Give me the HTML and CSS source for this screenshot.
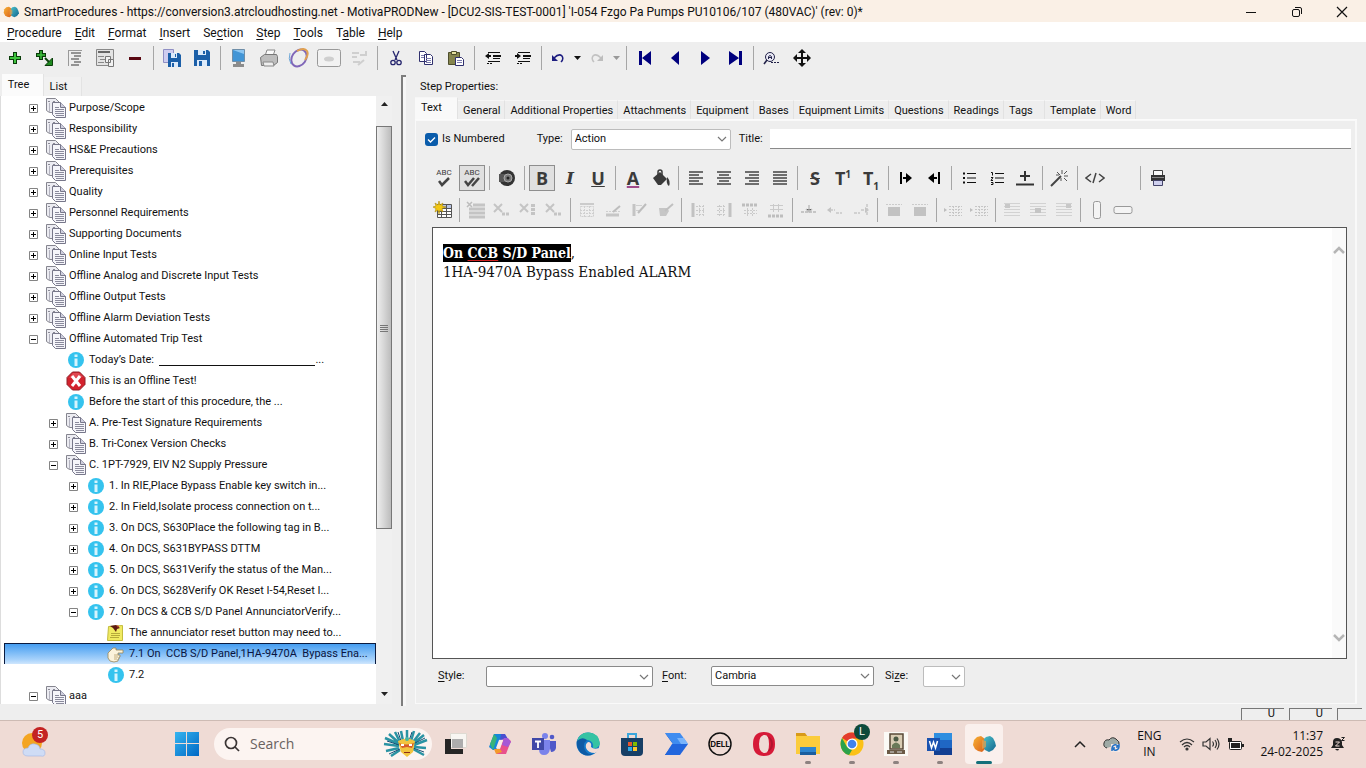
FILE: index.html
```html
<!DOCTYPE html>
<html lang="en">
<head>
<meta charset="utf-8">
<title>SmartProcedures</title>
<link rel="stylesheet" href="styles.css">
</head>
<body>
<svg class="sprite" aria-hidden="true">
  <defs>
    <linearGradient id="g-org" x1="0" y1="0" x2="1" y2="1"><stop offset="0" stop-color="#f9b233"/><stop offset="1" stop-color="#d9601c"/></linearGradient>
    <linearGradient id="g-teal" x1="0" y1="0" x2="1" y2="1"><stop offset="0" stop-color="#4fc3c9"/><stop offset="1" stop-color="#12658f"/></linearGradient>
    <linearGradient id="g-win" x1="0" y1="0" x2="1" y2="1"><stop offset="0" stop-color="#35b5f0"/><stop offset="1" stop-color="#0067c4"/></linearGradient>
  </defs>
  <symbol id="logo" viewBox="0 0 24 18"><path fill="url(#g-org)" d="M5 2l4-1 4 3v10l-3 3-4-1-3-2-2-4 1-5z"/><path fill="url(#g-teal)" d="M14 2l4-1 3 2 2 4 1 4-3 4-4 2-4-2-2-4 1-7z"/><path fill="#e9a04a" d="M10 5l4 1v6l-4 2z" opacity=".7"/></symbol>
  <symbol id="plus" viewBox="0 0 11 11"><path fill="#fff" stroke="#848484" d="M1.500 1.500h8v8h-8z"/><path stroke="#000" d="M3 5.500h5M5.500 3v5"/></symbol>
  <symbol id="minus" viewBox="0 0 11 11"><path fill="#fff" stroke="#848484" d="M1.500 1.500h8v8h-8z"/><path stroke="#000" d="M3 5.500h5"/></symbol>
  <symbol id="doc" viewBox="0 0 20 20"><path fill="#ececf2" stroke="#85858f" d="M.5.500h9l4 4v10h-10L.5 12.500z"/><path stroke="#8a8a96" d="M2 3.500h2M7 3.500h2"/><path stroke="#b4b4c0" d="M3.500 5v9"/><path fill="#f5f5fa" stroke="#77778a" d="M6.500 4.500h8l5 5v10h-10l-3-3z"/><path fill="#cfcfde" stroke="#77778a" d="M14.500 4.500v5h5"/><path stroke="#8a8a9c" d="M9 9.500h4M9 11.500h9M9 13.500h9M9 15.500h9M10 17.500h8"/></symbol>
  <symbol id="info" viewBox="0 0 20 20"><circle cx="10" cy="10" r="8" fill="#35c3ee"/><path fill="#d6f4fd" d="M8.500 4.500h3v2.500h-3zM8.500 8.500h3V16h-3z"/></symbol>
  <symbol id="stop" viewBox="0 0 20 20"><path fill="#d3222d" stroke="#8f2029" d="M6.500 1h7L19 6.500v7L13.500 19h-7L1 13.500v-7z"/><path fill="#e9626a" d="M7 2h6l4 4-14 1z" opacity=".6"/><path stroke="#fff" stroke-width="3" d="M6 5l8 10M14 5l-8 10"/></symbol>
  <symbol id="note" viewBox="0 0 20 20"><path fill="#f0ea62" stroke="#c4bd3e" d="M2.500 3.500l14-1v15h-15z"/><path stroke="#b5a93a" d="M5 10.500h9M5 12.500h9M4 14.500h9"/><path fill="#5b1a12" d="M4 3l6-1 4 3-3 1-1 3-3-4z"/><path fill="#b43a28" d="M10 2l3 1-1 2z"/></symbol>
  <symbol id="hand" viewBox="0 0 20 20"><path fill="#fbf3dc" stroke="#9a8757" stroke-width=".8" d="M2 9l5-5h3v2h7v3h-5v2h2v2h-1v2h-1v2l-4 1-4-1-2-3z"/><path stroke="#b7a06a" stroke-width=".8" d="M8 11h4M8 13h4M8 15h3"/></symbol>
  <symbol id="floppy" viewBox="0 0 20 20"><path fill="#1b5fa8" d="M2 2h14l2 2v14H2z"/><path fill="#dceafa" d="M6 2h8v5H6zM5 12h10v6H5z"/><path fill="#1b5fa8" d="M11 3h2v3h-2zM7 13h3v5H7z"/></symbol>
  <symbol id="i-l" viewBox="0 0 18 18"><path stroke="#444" stroke-width="1.300" d="M2 3h14M2 6h10M2 9h14M2 12h10M2 15h14"/></symbol>
  <symbol id="i-c" viewBox="0 0 18 18"><path stroke="#444" stroke-width="1.300" d="M2 3h14M4 6h10M2 9h14M4 12h10M2 15h14"/></symbol>
  <symbol id="i-r" viewBox="0 0 18 18"><path stroke="#444" stroke-width="1.300" d="M2 3h14M6 6h10M2 9h14M6 12h10M2 15h14"/></symbol>
  <symbol id="i-j" viewBox="0 0 18 18"><path stroke="#444" stroke-width="1.300" d="M2 3h14M2 6h14M2 9h14M2 12h14M2 15h14"/></symbol>
  <symbol id="t-grid" viewBox="0 0 18 18"><path stroke="#cbcbcb" stroke-width="2" d="M2 3h14"/><path fill="none" stroke="#cfcfcf" stroke-dasharray="2 1" d="M2.500 5.500h13v10h-13zM2 9.500h14M2 12.500h14M6.500 5v11M11.500 5v11"/></symbol>
  <symbol id="t-colL" viewBox="0 0 18 18"><path stroke="#c2c2c2" stroke-width="3" d="M4 2v14"/><path stroke="#cacaca" fill="none" stroke-dasharray="2 1" d="M7 5.500h9M7 9.500h9M7 13.500h9M10.500 4v11M14.500 4v11"/></symbol>
  <symbol id="t-colR" viewBox="0 0 18 18"><path stroke="#c2c2c2" stroke-width="3" d="M15 2v14"/><path stroke="#cacaca" fill="none" stroke-dasharray="2 1" d="M2 5.500h9M2 9.500h9M2 13.500h9M4.500 4v11M8.500 4v11"/></symbol>
  <symbol id="t-rowT" viewBox="0 0 18 18"><path stroke="#bebebe" stroke-width="3" stroke-dasharray="3 1" d="M1 4h16"/><path stroke="#cacaca" fill="none" stroke-dasharray="2 1" d="M3 9.500h13M3 12.500h13M6.500 7v8M11.500 7v8"/></symbol>
  <symbol id="t-rowB" viewBox="0 0 18 18"><path stroke="#bebebe" stroke-width="3" stroke-dasharray="3 1" d="M1 15h16"/><path stroke="#cacaca" fill="none" d="M3 4.500h13M3 8.500h13M6.500 3v8M11.500 3v8"/></symbol>
  <symbol id="t-x" viewBox="0 0 18 18"><path stroke="#c4c4c4" stroke-width="2" d="M1 3l8 8M9 3l-8 8"/><path stroke="#c4c4c4" stroke-width="3" stroke-dasharray="3 1" d="M9 13h8"/></symbol>
  <symbol id="t-xr" viewBox="0 0 18 18"><path stroke="#c4c4c4" stroke-width="2" d="M1 3l8 8M9 3l-8 8"/><path stroke="#c4c4c4" stroke-width="4" stroke-dasharray="3 1" d="M14 3v12"/></symbol>
  <symbol id="t-xrow" viewBox="0 0 20 18"><path stroke="#bdbdbd" stroke-width="1.500" d="M1 1l5 5M6 1l-5 5"/><path stroke="#c4c4c4" stroke-width="3" d="M7 4h12M3 8h16M3 12h16M3 16h16"/></symbol>
  <symbol id="t-pen" viewBox="0 0 18 18"><path stroke="#c6c6c6" stroke-width="3" d="M2 14h13"/><path fill="none" stroke="#cfcfcf" stroke-dasharray="2 1" d="M2 10.500h14"/><path stroke="#bdbdbd" stroke-width="2" d="M9 11l7-6"/></symbol>
  <symbol id="t-brush" viewBox="0 0 18 18"><path fill="#c6c6c6" d="M3 7h8l2 3-3 5H4z"/><path stroke="#c0c0c0" stroke-width="2" d="M9 10l8-7"/></symbol>
  <symbol id="t-brush2" viewBox="0 0 18 18"><path stroke="#c4c4c4" stroke-width="3" d="M4 3v12"/><path fill="none" stroke="#cfcfcf" d="M6 4.500h6M6 9.500h5"/><path stroke="#bdbdbd" stroke-width="2" d="M8 12l8-9"/></symbol>
  <symbol id="t-split" viewBox="0 0 18 18"><path stroke="#c6c6c6" stroke-width="2" stroke-dasharray="3 1" d="M1 11h16"/><path stroke="#bdbdbd" stroke-width="1.500" d="M9 4v7M6 8l3 3 3-3"/></symbol>
  <symbol id="t-block" viewBox="0 0 18 18"><path fill="#c2c2c2" d="M3 6h12v9H3z"/><path stroke="#cbcbcb" stroke-dasharray="2 1" d="M1 3.500h16"/></symbol>
  <symbol id="t-sel" viewBox="0 0 20 18"><path fill="#bdbdbd" d="M1 7l3 2-3 2z"/><path stroke="#c6c6c6" fill="none" stroke-dasharray="2 1" d="M6 5.500h13M6 8.500h13M6 11.500h13M6 14.500h13M10.500 5v10M15.500 5v10"/></symbol>
  <symbol id="t-al" viewBox="0 0 18 18"><path stroke="#d2d2d2" d="M1 2.500h16M1 5.500h16M1 8.500h16M1 11.500h16M1 14.500h16"/><path fill="#c8c8c8" d="M2 3h5v4H2z"/></symbol>
  <symbol id="t-al2" viewBox="0 0 18 18"><path stroke="#d2d2d2" d="M1 2.500h16M1 5.500h16M1 8.500h16M1 11.500h16M1 14.500h16"/><path fill="#c4c4c4" d="M6 7h6v5H6z"/></symbol>
  <symbol id="t-al3" viewBox="0 0 18 18"><path stroke="#d2d2d2" d="M1 2.500h16M1 5.500h16M1 8.500h16M1 11.500h16M1 14.500h16"/><path fill="#c8c8c8" d="M11 3h5v4h-5z"/></symbol>
</svg>

<header class="titlebar">
  <svg width="16" height="12"><use href="#logo"/></svg>
  <h1>SmartProcedures - https://conversion3.atrcloudhosting.net - MotivaPRODNew - [DCU2-SIS-TEST-0001] 'I-054 Fzgo Pa Pumps PU10106/107 (480VAC)' (rev: 0)*</h1>
  <div class="winbtns">
    <button aria-label="Minimize"><svg width="12" height="12"><path stroke="#111" d="M1 6.500h10"/></svg></button>
    <button aria-label="Restore"><svg width="12" height="12" fill="none" stroke="#111"><rect x="1.500" y="3.500" width="7" height="7" rx="1.500"/><path d="M4 1.500h5q1.500 0 1.500 1.500v5"/></svg></button>
    <button aria-label="Close"><svg width="12" height="12"><path stroke="#111" stroke-width="1.200" d="M1 1l10 10M11 1L1 11"/></svg></button>
  </div>
</header>

<nav class="menubar">
  <button><u>P</u>rocedure</button><button><u>E</u>dit</button><button><u>F</u>ormat</button><button><u>I</u>nsert</button><button>Se<u>c</u>tion</button><button><u>S</u>tep</button><button><u>T</u>ools</button><button>T<u>a</u>ble</button><button><u>H</u>elp</button>
</nav>

<div class="toolbar main-tools" role="toolbar" aria-label="Standard">
  <button aria-label="Add"><svg width="14" height="14"><path stroke="#0a3d0a" stroke-width="4" d="M1 7h12M7 1v12"/><path stroke="#3fc43f" stroke-width="2" d="M2 7h10M7 2v10"/></svg></button>
  <button aria-label="Add child"><svg width="20" height="20"><path stroke="#0a3d0a" stroke-width="4" d="M1 7h10M6 2v10"/><path stroke="#3fc43f" stroke-width="1.500" d="M2 7h8M6 3v8"/><path stroke="#0a3d0a" stroke-width="2" d="M10 10l5 5"/><path fill="#1f8a1f" stroke="#0a3d0a" d="M17.500 10v7.500H10z"/></svg></button>
  <button aria-label="Outline"><svg width="16" height="18"><path stroke="#999" d="M1.500 1v16M1 1.500h14"/><path stroke="#777" stroke-width="1.500" d="M4 4h10M7 7h7M4 10h8M7 13h7M4 16h8"/></svg></button>
  <button aria-label="Copy outline"><svg width="20" height="20"><path fill="#e3e3e3" stroke="#888" d="M1.500 1.500h17v16h-17z"/><path stroke="#666" stroke-width="2" d="M3 4h12"/><path stroke="#888" d="M3 8.500h6M5 11.500h5M3 14.500h6"/><path fill="#f2f2f2" stroke="#777" d="M10.500 8.500h5v6h-5zM13.500 11.500h5v7h-5z"/></svg></button>
  <button aria-label="Remove"><svg width="14" height="14"><path stroke="#5a0812" stroke-width="3" d="M1 7.500h12"/></svg></button>
  <i class="sep"></i>
  <button aria-label="Save all"><svg width="20" height="20"><path fill="#cfcdf0" stroke="#8f8fc4" d="M1.500 1.500h10v13h-10z"/><path fill="#1b5fa8" d="M6 5h11l2 2v12H6z"/><path fill="#dceafa" d="M9 5h6v5H9zM9 14h7v5H9z"/><path fill="#1b5fa8" d="M13 6h1v3h-1zM10 15h2v4h-2z"/></svg></button>
  <button aria-label="Save"><svg width="20" height="20"><use href="#floppy"/></svg></button>
  <i class="sep"></i>
  <button aria-label="Preview"><svg width="18" height="20"><path fill="#4295d6" stroke="#6f8ea8" d="M2.500 1.500h12v12h-12z"/><path fill="#8cc6f2" d="M3 2h11v4z"/><path fill="#8c8c8c" d="M6 14h5v2h3v3H3v-3h3z"/></svg></button>
  <button aria-label="Print"><svg width="20" height="20"><path fill="#fafafa" stroke="#888" d="M6 8l2-6h8l-2 6z"/><path fill="#bdbdbd" stroke="#777" d="M1.500 9.500l4-3h12l1 2v6l-4 3h-12z"/><path fill="#eee" stroke="#888" d="M4 14h10l1 4H5z"/></svg></button>
  <button aria-label="Ring"><svg width="22" height="20" fill="none"><ellipse cx="11" cy="10" rx="7" ry="9" transform="rotate(35 11 10)" stroke="#7f66b8" stroke-width="2"/><path stroke="#e0a050" stroke-width="2" d="M9 3q7-4 10 0q2 4-2 9"/><path stroke="#6fa8d8" d="M2 5q-2 6 1 11"/></svg></button>
  <button aria-label="Frame" disabled><svg width="26" height="20"><rect x="1.500" y="1.500" width="23" height="17" rx="2" fill="#f2f2f2" stroke="#999"/><ellipse cx="13" cy="11" rx="5" ry="2.500" fill="#cfcfcf"/></svg></button>
  <button aria-label="Update" disabled><svg width="18" height="18"><path stroke="#cfcfcf" stroke-width="2" fill="none" d="M2 4h7M2 8h5M10 6h6V2M8 16l6-5M3 13h7"/></svg></button>
  <i class="sep"></i>
  <button aria-label="Cut"><svg width="14" height="16" fill="none" stroke="#26266e" stroke-width="1.300"><path d="M4 1l4 9M10 1L6 10"/><circle cx="4" cy="12.500" r="2.200"/><circle cx="10" cy="12.500" r="2.200"/></svg></button>
  <button aria-label="Copy"><svg width="16" height="16"><path fill="#fff" stroke="#30306e" d="M1.500 1.500h5l2 2v8h-7zM6.500 4.500h6l2 2v8h-8z"/><path stroke="#7c7cae" d="M3 5.500h3M3 7.500h3M8 8.500h5M8 10.500h5M8 12.500h5"/></svg></button>
  <button aria-label="Paste"><svg width="18" height="17"><path fill="#85854e" stroke="#4e4e2c" d="M1.500 2.500h11v12h-11z"/><path fill="#e5e2a0" stroke="#4e4e2c" d="M4.500 1.500h5v3h-5z"/><path fill="#fff" stroke="#30306e" d="M8.500 7.500h6l2 2v6h-8z"/><path stroke="#7c7cae" d="M10 10.500h5M10 12.500h5"/></svg></button>
  <i class="sep"></i>
  <button aria-label="Outdent"><svg width="18" height="14"><path stroke="#111" d="M4 1.500h12M9 7.500h7M4 10.500h12"/><path stroke="#111" stroke-width="2" d="M9 5h8"/><path fill="#111" d="M1 5l4-3v2h2v2H5v2z"/><path stroke="#111" stroke-dasharray="2 1" d="M3 12.500h6"/></svg></button>
  <button aria-label="Indent"><svg width="18" height="14"><path stroke="#111" d="M4 1.500h12M9 7.500h7M4 10.500h12"/><path stroke="#111" stroke-width="2" d="M9 5h8"/><path fill="#111" d="M7 5L3 2v2H1v2h2v2z"/><path stroke="#111" stroke-dasharray="2 1" d="M3 12.500h6"/></svg></button>
  <i class="sep"></i>
  <button class="mid" aria-label="Undo"><svg width="14" height="12"><path fill="none" stroke="#1d1d80" stroke-width="1.500" d="M3 6q5-5 8-2q2 3-1 6"/><path fill="#1d1d80" d="M1 3v6h6z"/></svg></button><button class="drop" aria-label="Undo list"><svg width="7" height="4"><path fill="#111" d="M0 0h7L3.500 4z"/></svg></button>
  <button class="mid" aria-label="Redo" disabled><svg width="14" height="12"><path fill="none" stroke="#c2c2c2" stroke-width="1.500" d="M11 6Q6 1 3 4q-2 3 1 6"/><path fill="#bdbdbd" d="M13 3v6H7z"/></svg></button><button class="drop" aria-label="Redo list" disabled><svg width="7" height="4"><path fill="#999" d="M0 0h7L3.500 4z"/></svg></button>
  <i class="sep"></i>
  <button aria-label="First"><svg width="14" height="14"><path fill="#00007e" d="M1 0h3v14H1zM13 0v14L4 7z"/></svg></button>
  <button aria-label="Previous"><svg width="14" height="14"><path fill="#00007e" d="M11 0v14L3 7z"/></svg></button>
  <button aria-label="Next"><svg width="14" height="14"><path fill="#00007e" d="M3 0v14l9-7z"/></svg></button>
  <button aria-label="Last"><svg width="14" height="14"><path fill="#00007e" d="M11 0h3v14h-3zM1 0v14l10-7z"/></svg></button>
  <i class="sep"></i>
  <button aria-label="Find"><svg width="18" height="14"><circle cx="7" cy="6" r="4.500" fill="#e8e8f4" stroke="#222248"/><path stroke="#222248" stroke-width="1.500" d="M4 9l-3 4"/><path fill="none" stroke="#222248" d="M5.500 8V5.500q1.500-2 3 0V8M5.500 6.500h3"/><path stroke="#222248" stroke-dasharray="2 1" d="M8 11.500h9"/></svg></button>
  <button aria-label="Move"><svg width="18" height="18"><path stroke="#111" stroke-width="2" d="M3 9h12M9 3v12"/><path fill="#111" d="M9 0l4 4H5zM9 18l4-4H5zM0 9l4-4v8zM18 9l-4-4v8z"/></svg></button>
</div>

<main class="work">
  <section class="left">
    <div class="ltabs" role="tablist"><button role="tab" class="on">Tree</button><button role="tab">List</button></div>
    <div class="treebox">
      <ul class="tree">
        <li><button class="tog" aria-label="Expand"><svg><use href="#plus"/></svg></button><svg class="ico"><use href="#doc"/></svg>Purpose/Scope</li>
        <li><button class="tog" aria-label="Expand"><svg><use href="#plus"/></svg></button><svg class="ico"><use href="#doc"/></svg>Responsibility</li>
        <li><button class="tog" aria-label="Expand"><svg><use href="#plus"/></svg></button><svg class="ico"><use href="#doc"/></svg>HS&amp;E Precautions</li>
        <li><button class="tog" aria-label="Expand"><svg><use href="#plus"/></svg></button><svg class="ico"><use href="#doc"/></svg>Prerequisites</li>
        <li><button class="tog" aria-label="Expand"><svg><use href="#plus"/></svg></button><svg class="ico"><use href="#doc"/></svg>Quality</li>
        <li><button class="tog" aria-label="Expand"><svg><use href="#plus"/></svg></button><svg class="ico"><use href="#doc"/></svg>Personnel Requirements</li>
        <li><button class="tog" aria-label="Expand"><svg><use href="#plus"/></svg></button><svg class="ico"><use href="#doc"/></svg>Supporting Documents</li>
        <li><button class="tog" aria-label="Expand"><svg><use href="#plus"/></svg></button><svg class="ico"><use href="#doc"/></svg>Online Input Tests</li>
        <li><button class="tog" aria-label="Expand"><svg><use href="#plus"/></svg></button><svg class="ico"><use href="#doc"/></svg>Offline Analog and Discrete Input Tests</li>
        <li><button class="tog" aria-label="Expand"><svg><use href="#plus"/></svg></button><svg class="ico"><use href="#doc"/></svg>Offline Output Tests</li>
        <li><button class="tog" aria-label="Expand"><svg><use href="#plus"/></svg></button><svg class="ico"><use href="#doc"/></svg>Offline Alarm Deviation Tests</li>
        <li><button class="tog" aria-label="Collapse"><svg><use href="#minus"/></svg></button><svg class="ico"><use href="#doc"/></svg>Offline Automated Trip Test</li>
        <li class="l1 leaf"><svg class="ico"><use href="#info"/></svg>Today’s Date:  <span class="blank"></span>...</li>
        <li class="l1 leaf"><svg class="ico"><use href="#stop"/></svg>This is an Offline Test!</li>
        <li class="l1 leaf"><svg class="ico"><use href="#info"/></svg>Before the start of this procedure, the ...</li>
        <li class="l1"><button class="tog" aria-label="Expand"><svg><use href="#plus"/></svg></button><svg class="ico"><use href="#doc"/></svg>A. Pre-Test Signature Requirements</li>
        <li class="l1"><button class="tog" aria-label="Expand"><svg><use href="#plus"/></svg></button><svg class="ico"><use href="#doc"/></svg>B. Tri-Conex Version Checks</li>
        <li class="l1"><button class="tog" aria-label="Collapse"><svg><use href="#minus"/></svg></button><svg class="ico"><use href="#doc"/></svg>C. 1PT-7929, EIV N2 Supply Pressure</li>
        <li class="l2"><button class="tog" aria-label="Expand"><svg><use href="#plus"/></svg></button><svg class="ico"><use href="#info"/></svg>1. In RIE,Place Bypass Enable key switch in...</li>
        <li class="l2"><button class="tog" aria-label="Expand"><svg><use href="#plus"/></svg></button><svg class="ico"><use href="#info"/></svg>2. In Field,Isolate process connection on t...</li>
        <li class="l2"><button class="tog" aria-label="Expand"><svg><use href="#plus"/></svg></button><svg class="ico"><use href="#info"/></svg>3. On DCS, S630Place the following tag in B...</li>
        <li class="l2"><button class="tog" aria-label="Expand"><svg><use href="#plus"/></svg></button><svg class="ico"><use href="#info"/></svg>4. On DCS, S631BYPASS DTTM</li>
        <li class="l2"><button class="tog" aria-label="Expand"><svg><use href="#plus"/></svg></button><svg class="ico"><use href="#info"/></svg>5. On DCS, S631Verify the status of the Man...</li>
        <li class="l2"><button class="tog" aria-label="Expand"><svg><use href="#plus"/></svg></button><svg class="ico"><use href="#info"/></svg>6. On DCS, S628Verify OK Reset I-54,Reset I...</li>
        <li class="l2"><button class="tog" aria-label="Collapse"><svg><use href="#minus"/></svg></button><svg class="ico"><use href="#info"/></svg>7. On DCS &amp; CCB S/D Panel AnnunciatorVerify...</li>
        <li class="l3 leaf"><svg class="ico"><use href="#note"/></svg>The annunciator reset button may need to...</li>
        <li class="l3 leaf sel"><svg class="ico"><use href="#hand"/></svg>7.1 On  CCB S/D Panel,1HA-9470A  Bypass Ena...</li>
        <li class="l3 leaf"><svg class="ico"><use href="#info"/></svg>7.2</li>
        <li><button class="tog" aria-label="Collapse"><svg><use href="#minus"/></svg></button><svg class="ico"><use href="#doc"/></svg>aaa</li>
      </ul>
      <div class="vscroll">
        <svg width="7" height="4"><path fill="#222" d="M0 4h7L3.500 0z"/></svg>
        <div class="track"><div class="thumb"><svg width="8" height="8"><path stroke="#777" d="M0 1.500h8M0 3.500h8M0 5.500h8M0 7.500h8"/></svg></div></div>
        <svg width="7" height="4"><path fill="#222" d="M0 0h7L3.500 4z"/></svg>
      </div>
    </div>
  </section>
  <div class="splitter"></div>
  <section class="right">
    <h2>Step Properties:</h2>
    <div class="tabs" role="tablist">
      <button role="tab" class="on">Text</button><button role="tab">General</button><button role="tab">Additional Properties</button><button role="tab">Attachments</button><button role="tab">Equipment</button><button role="tab">Bases</button><button role="tab">Equipment Limits</button><button role="tab">Questions</button><button role="tab">Readings</button><button role="tab" class="short">Tags</button><button role="tab">Template</button><button role="tab">Word</button>
    </div>
    <div class="panel">
      <div class="props">
        <input type="checkbox" id="num" checked><label for="num">Is Numbered</label>
        <label class="type-l" for="type">Type:</label>
        <select id="type" class="type-s"><option>Action</option></select>
        <label class="title-l" for="ttl">Title:</label>
        <input type="text" id="ttl">
      </div>
      <div class="toolbar fmt" role="toolbar" aria-label="Formatting">
        <button aria-label="Spelling" class="abc"><span>ABC</span><svg width="14" height="10"><path fill="none" stroke="#444" stroke-width="2.500" d="M2 4l3 4 7-7"/></svg></button>
        <button aria-label="Spell as you type" class="abc pressed"><span>ABC</span><svg width="18" height="10"><path fill="none" stroke="#444" stroke-width="2.500" d="M2 4l3 4 6-7M9 9l7-8"/></svg></button>
        <i class="sep"></i>
        <button aria-label="Speak"><svg width="18" height="18"><circle cx="9" cy="9" r="8" fill="#333"/><path fill="#555" d="M1 5h6v8H1z"/><circle cx="10" cy="9" r="4" fill="#777" stroke="#aaa"/><circle cx="10" cy="9" r="1.500" fill="#222"/></svg></button>
        <i class="sep"></i>
        <button class="glyph pressed">B</button>
        <button class="glyph it">I</button>
        <button class="glyph un">U</button>
        <i class="sep"></i>
        <button class="glyph col">A</button>
        <button aria-label="Fill"><svg width="20" height="18"><path fill="#3a3a3a" d="M2 9l7-6 7 7-6 6H7z"/><path fill="none" stroke="#3a3a3a" stroke-width="1.500" d="M7 8V3q0-2 2-2t2 2v3"/><path fill="#3a3a3a" d="M16 8q4 4 2 9q-3-1-2-9z"/></svg></button>
        <i class="sep"></i>
        <button aria-label="Left"><svg width="18" height="18"><use href="#i-l"/></svg></button>
        <button aria-label="Centre"><svg width="18" height="18"><use href="#i-c"/></svg></button>
        <button aria-label="Right"><svg width="18" height="18"><use href="#i-r"/></svg></button>
        <button aria-label="Justify"><svg width="18" height="18"><use href="#i-j"/></svg></button>
        <i class="sep"></i>
        <button class="glyph st">S</button>
        <button class="glyph">T<sup>1</sup></button>
        <button class="glyph">T<sub>1</sub></button>
        <i class="sep"></i>
        <button aria-label="Tab right"><svg width="14" height="14"><path stroke="#000" stroke-width="2" d="M2 1v12M4 7h4"/><path fill="#000" d="M7 2l6 5-6 5z"/></svg></button>
        <button aria-label="Tab left"><svg width="14" height="14"><path stroke="#000" stroke-width="2" d="M12 1v12M6 7h4"/><path fill="#000" d="M7 2L1 7l6 5z"/></svg></button>
        <i class="sep"></i>
        <button aria-label="Bullets"><svg width="14" height="14"><path stroke="#111" stroke-width="1.200" d="M5 2.500h9M5 7h9M5 11.500h9"/><path stroke="#111" stroke-width="2" d="M1 2.500h2M1 7h2M1 11.500h2"/></svg></button>
        <button aria-label="Numbering"><svg width="14" height="14"><path stroke="#111" stroke-width="1.200" d="M5 2.500h9M5 7h9M5 11.500h9"/><path fill="none" stroke="#111" d="M1 1.500h1.500v3M1 6.500h2l-2 3h2M1 11.500h2v2H1"/></svg></button>
        <button aria-label="Insert line"><svg width="18" height="16"><path stroke="#333" stroke-width="2" d="M4 6h10M9 1v10M0 14.500h18"/></svg></button>
        <i class="sep"></i>
        <button aria-label="Magic"><svg width="20" height="18"><path stroke="#444" stroke-width="2" d="M1 17L11 7"/><path stroke="#555" d="M12 1v4M7 3l3 3M17 2l-3 3M14 7h4M14 9l3 3M11 9v3M6 6h3"/></svg></button>
        <i class="sep"></i>
        <button aria-label="Source"><svg width="20" height="14"><path fill="none" stroke="#444" stroke-width="1.500" d="M6 3L1 7l5 4M14 3l5 4-5 4M11 2L8 12"/></svg></button>
        <i class="gap"></i>
        <i class="sep"></i>
        <button aria-label="Print step"><svg width="16" height="18"><path fill="#fafafa" stroke="#444" d="M3.500 1.500h9v5h-9z"/><path fill="#333" d="M1 6h14v6H1z"/><path stroke="#888" d="M2 8.500h12"/><path fill="#cfd0ee" stroke="#44446a" d="M3.500 11.500h9v5h-9z"/></svg></button>
      </div>
      <div class="toolbar tbl" role="toolbar" aria-label="Table">
        <button aria-label="Insert table"><svg width="20" height="20"><path fill="#fff" stroke="#555" d="M4.500 4.500h14v13h-14z"/><path fill="#b8c4e4" d="M5 5h13v3H5z"/><path stroke="#555" d="M4 8.500h14M4 11.500h14M4 14.500h14M8.500 5v13M13.500 5v13"/><path fill="#f3c712" stroke="#a8870a" stroke-width=".6" d="M6 1l1 4 3-2-1 3 4 1-4 1.500L10 12l-3-2-1 4-1-4-3 2 1-3.500L0 7l3-1-1-3 3 2z"/></svg></button>
        <i class="sep"></i>
        <button disabled><svg width="20" height="18"><use href="#t-xrow"/></svg></button><button disabled><svg width="18" height="18"><use href="#t-x"/></svg></button><button disabled><svg width="18" height="18"><use href="#t-xr"/></svg></button><button disabled><svg width="18" height="18"><use href="#t-x"/></svg></button>
        <i class="sep"></i>
        <button disabled><svg width="18" height="18"><use href="#t-grid"/></svg></button><button disabled><svg width="18" height="18"><use href="#t-pen"/></svg></button><button disabled><svg width="18" height="18"><use href="#t-brush2"/></svg></button><button disabled><svg width="18" height="18"><use href="#t-brush"/></svg></button>
        <i class="sep"></i>
        <button disabled><svg width="18" height="18"><use href="#t-colL"/></svg></button><button disabled><svg width="18" height="18"><use href="#t-colR"/></svg></button><button disabled><svg width="18" height="18"><use href="#t-rowT"/></svg></button><button disabled><svg width="18" height="18"><use href="#t-rowB"/></svg></button>
        <i class="sep"></i>
        <button disabled><svg width="18" height="18"><use href="#t-split"/></svg></button><button disabled><svg width="18" height="18"><path fill="#c2c2c2" d="M1 9l4-3v6z"/><path stroke="#c8c8c8" stroke-width="1.500" stroke-dasharray="3 1" d="M4 9h5M10 12h6"/></svg></button><button disabled><svg width="18" height="18"><path fill="#c2c2c2" d="M17 9l-4-3v6z"/><path stroke="#c8c8c8" stroke-width="1.500" stroke-dasharray="3 1" d="M2 12h6M9 9h5M15 3v12"/></svg></button>
        <i class="sep"></i>
        <button disabled><svg width="18" height="18"><use href="#t-block"/></svg></button><button disabled><svg width="18" height="18"><use href="#t-block"/></svg></button>
        <i class="sep"></i>
        <button disabled><svg width="20" height="18"><use href="#t-sel"/></svg></button><button disabled><svg width="20" height="18"><use href="#t-sel"/></svg></button>
        <i class="sep"></i>
        <button disabled><svg width="18" height="18"><use href="#t-al"/></svg></button><button disabled><svg width="18" height="18"><use href="#t-al2"/></svg></button><button disabled><svg width="18" height="18"><use href="#t-al3"/></svg></button>
        <i class="sep"></i>
        <button aria-label="Vertical box"><svg width="10" height="18"><rect x="1.500" y=".5" width="7" height="17" rx="2" fill="#f4f4f4" stroke="#999"/></svg></button><button aria-label="Horizontal box"><svg width="20" height="10"><rect x="1" y="1.500" width="18" height="7" rx="2" fill="#f4f4f4" stroke="#999"/></svg></button>
      </div>
      <div class="editor">
        <div class="page" contenteditable="true" spellcheck="false"><p><b>On <span class="err">CCB</span> S/D Panel</b>,</p><p>1HA-9470A Bypass Enabled ALARM</p></div>
        <div class="escroll"><svg width="12" height="8"><path fill="none" stroke="#b5b5b5" stroke-width="2.500" d="M1 7l5-5 5 5"/></svg><svg width="12" height="8"><path fill="none" stroke="#b5b5b5" stroke-width="2.500" d="M1 1l5 5 5-5"/></svg></div>
      </div>
      <div class="foot">
        <label for="sty"><u>S</u>tyle:</label><select id="sty"><option></option></select>
        <label for="fnt"><u>F</u>ont:</label><select id="fnt"><option>Cambria</option></select>
        <label for="siz">Si<u>z</u>e:</label><select id="siz"><option></option></select>
      </div>
    </div>
  </section>
</main>

<footer class="status"><span>U</span><span>U</span><span class="end"></span></footer>

<nav class="taskbar">
  <button class="weather" aria-label="Weather"><svg width="28" height="32"><circle cx="12" cy="15" r="10" fill="#f4a522"/><path fill="#cfdcf5" stroke="#9db6e6" stroke-width=".6" d="M8 28q-5 0-5-4t5-4q2-5 7-4t5 5q5 0 5 4t-4 3z"/></svg><span class="badge">5</span></button>
  <div class="apps">
    <button aria-label="Start" class="start"><svg width="24" height="24"><path fill="url(#g-win)" d="M0 0h11v11H0zM12 0h12v11H12zM0 12h11v12H0zM12 12h12v12H12z"/></svg></button>
    <div class="search"><svg width="16" height="16"><circle cx="7" cy="7" r="5.500" fill="none" stroke="#3a3434" stroke-width="1.700"/><path stroke="#3a3434" stroke-width="1.700" d="M11 11l4 4"/></svg><input type="search" placeholder="Search" aria-label="Search"><svg width="46" height="28" viewBox="0 0 46 28"><g stroke="#2a93a3" stroke-width="2.500" fill="none"><path d="M16 14L2 8M16 13L6 4M17 12L12 2M20 11L18 1M24 11V0M28 11l3-10M30 12l7-9M31 13l10-8M31 15l13-5M31 17l12 1M30 19l11 6M16 16L1 14M16 18L3 21M17 20L8 26"/></g><g stroke="#174f77" stroke-width="1"><path d="M16 15L4 11M18 11L15 2M30 14l12-6M30 18l11 4M26 11l3-9M17 19L6 24"/></g><path fill="#f2c33e" d="M15 11q9-5 17 0l-2 11-6 5-6-5z"/><path fill="#d65a2c" d="M16 13q7 3 15 0l-2 5-5-1-5 1z"/><path fill="#fff" d="M18 14h3v2h-3zM26 14h3v2h-3z"/><path stroke="#8c2d18" d="M21 22.500h6"/><circle cx="24" cy="9" r="2" fill="#47b8a2"/></svg></div>
    <button aria-label="Task view"><svg width="24" height="24"><path fill="#f8f6f2" stroke="#dedad2" d="M6.500 1.500h16v14h-16z"/><path fill="#252525" d="M1 7h6v10h12v5H1z"/><path fill="#adadad" d="M8 7h11v9H8z"/></svg></button>
    <button aria-label="Copilot"><svg width="24" height="24"><path fill="#1687d9" d="M6 2h9l3 5h-6l-4 11H5L1 15z"/><path fill="#36b37a" d="M2 12l4-10 3 4-4 12z"/><path fill="#4a4fd0" d="M13 2h4l3 5-8 1z"/><path fill="#e8508c" d="M18 22H9l-3-5h6l4-11h3l4 3z"/><path fill="#f49a2c" d="M8 22l-2-5h6l2 3z"/><path fill="#a558d6" d="M16 6h4l3 4-3 5-6-2z"/><path fill="#fbe9e4" d="M11 8h4l-3 8H8z"/></svg></button>
    <button aria-label="Teams"><svg width="24" height="24"><circle cx="13" cy="4" r="3" fill="#7b83eb"/><circle cx="20" cy="5" r="2.300" fill="#5059c9"/><path fill="#5059c9" d="M16 9h8v7q-1 4-5 4z"/><path fill="#7b83eb" d="M7 8h11v9q-1 6-6 6t-5-6z"/><path fill="#4048a8" d="M0 6h12v12H0z"/><path stroke="#fff" stroke-width="1.800" d="M3 9.500h6M6 9.500V16"/></svg></button>
    <button aria-label="Edge"><svg width="24" height="24"><circle cx="12" cy="12" r="11.500" fill="#1479c9"/><path fill="#36c3a3" d="M1 10Q3 0 13 .5T24 12q-2 5-7 4 1-7-5-8T1 10z"/><path fill="#0d5aa5" d="M1 9q5-5 10-1-5 4-2 10t9 3Q12 26 5 21 0 16 1 9z"/><path fill="#f2ddd6" d="M12 10q4 0 3 5 3 3 8 1-1 4-4 5-7 0-9-5-1-4 2-6z"/></svg></button>
    <button aria-label="Store"><svg width="24" height="24"><path fill="none" stroke="#3aa6dc" stroke-width="2" d="M8 6V2h8v4"/><path fill="#173f66" d="M1 6h22v14q0 4-4 4H5q-4 0-4-4z"/><path fill="#e8562e" d="M8 10h4v4H8z"/><path fill="#7fba00" d="M13 10h4v4h-4z"/><path fill="#2fa9e8" d="M8 15h4v4H8z"/><path fill="#ffc52e" d="M13 15h4v4h-4z"/></svg></button>
    <button aria-label="Power Automate"><svg width="26" height="24"><path fill="#123fa8" d="M2 1l8 11L2 23h8l7-11z"/><path fill="#3f8cf0" d="M2 1h15l8 11h-8L10 12z"/><path fill="#2266dd" d="M9 12h16l-8 11H2z"/><path fill="#79b4fb" d="M14 6h7l4 6h-7z"/></svg></button>
    <button aria-label="Dell"><svg width="24" height="24"><circle cx="12" cy="12" r="11" fill="none" stroke="#111" stroke-width="1.500"/></svg><span class="dell">DELL</span></button>
    <button aria-label="Opera"><svg width="24" height="24"><path fill="#d61a38" fill-rule="evenodd" d="M12 0q11 0 11 12T12 24 1 12 12 0zm0 3q-5 1-5 9t5 9 5-9-5-9z"/><path fill="#8e1026" d="M15 4q8 8 0 16 6-2 6-8t-6-8z" opacity=".5"/></svg></button>
    <button aria-label="Explorer" class="run"><svg width="26" height="24"><path fill="#d89a1a" d="M1 1h9l3 4H1z"/><path fill="#fbcc3c" d="M1 4h24v18H1z"/><path fill="#2d86cf" d="M5 15h16v8H5z"/><path fill="#1a5f9f" d="M5 20h16v3H5z"/></svg></button>
    <button aria-label="Chrome" class="run chrome"><svg width="24" height="24"><circle cx="12" cy="12" r="11.500" fill="#fbc116"/><path fill="#e33b2e" d="M12 12L2 6Q5 .5 12 .5t10 6H12z"/><path fill="#2ba24c" d="M2 6l5 9 5 3-3 5Q1 21 .5 12 .5 9 2 6z"/><circle cx="12" cy="12" r="5.500" fill="#fff"/><circle cx="12" cy="12" r="4.300" fill="#3f82ee"/></svg><span class="badge green">L</span></button>
    <button aria-label="Remote" class="run"><svg width="24" height="24"><path fill="#fbfaf6" d="M0 0h24v24H0z"/><path fill="#d9cdb4" stroke="#5a4a38" stroke-width="1.500" d="M6 2h13v15H6z"/><circle cx="12" cy="7" r="2.500" fill="#4c5b45"/><path fill="#6a7a58" d="M8 16v-3q4-5 8 0v3z"/><path fill="#6b5a46" d="M3 18h18v4H3z"/><path stroke="#ddd" d="M6 20h4M13 20h5"/></svg></button>
    <button aria-label="Word" class="run"><svg width="26" height="24"><path fill="#2f8ee0" d="M7 1h18v8H7z"/><path fill="#1f67c4" d="M7 8h18v8H7z"/><path fill="#123f92" d="M7 16h18v7H7z"/><path fill="#1a52b0" d="M0 6h13v13H0z"/><path fill="none" stroke="#fff" stroke-width="1.500" d="M2.500 9L4.500 16 6.500 10 8.500 16 10.500 9"/></svg></button>
    <button aria-label="SmartProcedures" class="run active"><svg width="24" height="18"><use href="#logo"/></svg></button>
  </div>
  <div class="tray">
    <button aria-label="Hidden icons"><svg width="12" height="8"><path fill="none" stroke="#222" stroke-width="1.500" d="M1 7l5-5 5 5"/></svg></button>
    <button aria-label="Cloud" class="cloud"><svg width="18" height="16"><path fill="#9eaaa6" stroke="#333" d="M4 12q-4-1-3-5t5-3q3-4 7-1t3 5"/><path fill="#f4e6e2" d="M8 8h9v8H8z"/><path fill="none" stroke="#1e6fc4" stroke-width="1.500" d="M9 11q3-4 6-1M16 8v3h-3M16 12q-3 4-6 1M9 15v-3h3"/></svg></button>
    <button class="lang">ENG<br>IN</button>
    <button aria-label="Network"><svg width="16" height="14" fill="none" stroke="#333" stroke-width="1.200"><path d="M1 5q7-6 14 0M3 8q5-5 10 0M5 10q3-3 6 0"/><circle cx="8" cy="12" r="1" fill="#222"/></svg></button>
    <button aria-label="Volume"><svg width="18" height="14" fill="none" stroke="#333" stroke-width="1.200"><path d="M1 5h3l4-3.500v11L4 9H1zM10.500 4.500q2 2.500 0 5M13 3q3 4 0 8M15 1.500q4 5.500 0 11"/></svg></button>
    <button aria-label="Battery"><svg width="18" height="14"><rect x="2.500" y="4.500" width="12" height="8" rx="1" fill="#fff" stroke="#222"/><path fill="#222" d="M4 6h9v5H4zM15 7h2v3h-2zM1 1h4v4H1z"/></svg></button>
    <button class="clock">11:37<br>24-02-2025</button>
    <button aria-label="Notifications"><svg width="16" height="16"><path fill="#222" d="M1 12l2-3V6q0-4 4-4t5 4v3l2 3z"/><path fill="#222" d="M5 13h4q-1 3-4 0z"/><path fill="none" stroke="#f0dcd6" d="M5.500 6h4l-4 4h4"/><path fill="none" stroke="#222" d="M11.500 1.500h3l-3 3h3"/></svg></button>
  </div>
</nav>
</body>
</html>
```
FILE: styles.css
```css
* { box-sizing: border-box; }
body {
  margin: 0; height: 100vh; display: flex; flex-direction: column; overflow: hidden;
  background: #eee; color: #111; font: 11px/14px Roboto, "Liberation Sans", sans-serif;
}
button, select, input { font: inherit; color: inherit; }
button { border: 0; padding: 0; background: none; }
svg { display: block; flex: none; }
h1, h2, p, ul { margin: 0; padding: 0; font: inherit; list-style: none; }
.sprite { position: absolute; width: 0; height: 0; }

.titlebar { display: flex; align-items: center; height: 22px; padding: 1px 0 0 3px; gap: 5px; background: #faf0e6; flex: none; }
.titlebar h1 { flex: 1; font-size: 12px; white-space: nowrap; }
.winbtns { display: flex; }
.winbtns button { width: 46px; height: 20px; display: grid; place-items: center; }
.winbtns button:last-child { padding-right: 2px; }

.menubar { display: flex; gap: 13px; height: 20px; padding: 2px 7px 0; background: #fff; flex: none; font-size: 12px; align-items: center; }
u { text-underline-offset: 2px; }

.toolbar { display: flex; align-items: center; flex: none; }
.toolbar button { display: grid; place-items: center; height: 26px; }
.sep { width: 7px; height: 24px; flex: none; display: flex; justify-content: center; }
.sep::before { content: ""; width: 1px; background: #a6a6a6; }
.main-tools { height: 32px; }
.main-tools button { width: 30px; }
.main-tools .mid { width: 26px; }
.main-tools .drop { width: 13px; }

.work { flex: 1; min-height: 0; display: flex; }
.left { width: 392px; flex: none; display: flex; flex-direction: column; }
.ltabs { display: flex; height: 22px; align-items: flex-end; padding-left: 2px; flex: none; }
.ltabs button { height: 19px; width: 38px; padding-right: 8px; background: #f1f1f1; border-right: 1px solid #e3e3e3; }
.ltabs .on { height: 22px; width: 42px; background: #fbfbfb; }
.treebox { flex: 1; min-height: 0; display: flex; background: #fff; margin-bottom: 2px; border-left: 1px solid #ddd; }
.tree { flex: 1; min-width: 0; overflow: hidden; padding: 1px 0 0 3px; }
.tree li { height: 21px; display: flex; align-items: center; padding: 1px 0 0 24px; white-space: pre; }
.tree .tog { margin-right: 7px; }
.tog svg { width: 11px; height: 11px; }
.ico { width: 20px; height: 20px; margin-right: 3px; }
.tree .l1 { padding-left: 44px; }
.tree .l2 { padding-left: 64px; }
.tree .l3 { padding-left: 84px; }
.tree .leaf::before { content: ""; width: 18px; flex: none; }
.blank { width: 156px; height: 12px; border-bottom: 1px solid #111; }
.tree .sel { color: #0a1440; background: linear-gradient(#3f9af0, #a9d3fb 80%, #cfe6fd); box-shadow: inset 1px 1px #0a1b40, inset -1px 0 #0a1b40; }
.vscroll { width: 16px; background: #f0f0f0; display: flex; flex-direction: column; align-items: center; padding: 6px 0 8px; }
.track { flex: 1; align-self: stretch; padding: 20px 0 163px; display: flex; }
.thumb { flex: 1; display: grid; place-items: center; border: 1px solid #777; background: linear-gradient(90deg, #eee, #d6d6d6 50%, #bcbcbc); }

.splitter { width: 5px; margin: 1px 9px 0; border: solid #7d7d7d; border-width: 2px 0 0 2px; background: #f6f6f6; flex: none; }

.right { flex: 1; min-width: 0; display: flex; flex-direction: column; padding-right: 9px; }
.right h2 { padding: 6px 5px 4px; }
.tabs { display: flex; height: 22px; align-items: flex-end; flex: none; border-bottom: 1px solid #fbfbfb; }
.tabs button { height: 19px; padding: 1px 4px 0 5px; border-right: 1px solid #e2e2e2; border-top: 1px solid #f6f6f6; white-space: nowrap; }
.tabs .on { height: 22px; width: 43px; background: #f9f9f9; text-align: left; padding: 0 0 2px 6px; }
.tabs .short { width: 41px; text-align: left; }
.panel { flex: 1; min-height: 0; display: flex; flex-direction: column; border: 1px solid #f9f9f9; border-right-width: 2px; margin-bottom: 2px; padding: 7px 4px 16px 9px; }

.props { display: flex; align-items: center; height: 22px; }
.props input[type=checkbox] { appearance: none; width: 13px; height: 13px; margin: 0 4px 0 0; border-radius: 3px; background: #0a5cab url("data:image/svg+xml,%3Csvg xmlns='http://www.w3.org/2000/svg' width='13' height='13'%3E%3Cpath fill='none' stroke='white' stroke-width='1.3' d='M3 6.500l2.500 2.500L10 4.500'/%3E%3C/svg%3E"); }
.props .type-l { margin-left: 32px; width: 34px; }
.title-l { width: 31px; margin-left: 8px; }
.props input[type=text] { flex: 1; min-width: 0; height: 20px; border: 0; border-bottom: 1px solid #8a8a8a; background: #fff; }
select {
  appearance: none; height: 21px; border: 1px solid #bcbcbc; border-radius: 2px; padding: 0 3px;
  background: #fff url("data:image/svg+xml,%3Csvg xmlns='http://www.w3.org/2000/svg' width='10' height='6'%3E%3Cpath fill='none' stroke='%23777' stroke-width='1.2' d='M1 1l4 4 4-4'/%3E%3C/svg%3E") no-repeat right 3px center;
}
.type-s { width: 160px; }

.fmt { height: 28px; margin: 14px 0 5px 5px; }
.fmt button, .gap { width: 28px; flex: none; }
.fmt button { color: #3b3b3b; }
.fmt .pressed { width: 26px; margin: 0 1px; border: 1px solid #8e8e8e; background: #e0e0e0; }
.abc { font-size: 9px; line-height: 8px; align-content: center; }
.abc span { font-size: 8px; }
.fmt .glyph { font: bold 18px/24px "Open Sans", sans-serif; display: block; }
.fmt .pressed.glyph { line-height: 22px; }
.fmt .it { font-family: "DejaVu Serif", serif; font-style: italic; font-size: 17px; }
.fmt .un { text-decoration: underline; }
.fmt .st { text-decoration: line-through; }
.fmt .col { text-decoration: underline; text-decoration-color: #a04a8a; text-decoration-thickness: 2px; }
.glyph sup, .glyph sub { font-size: 10px; line-height: 0; }
.tbl { height: 26px; margin-left: 5px; }
.tbl button { width: 26px; flex: none; }

.editor { flex: 1; min-height: 0; margin: 4px 4px 0 7px; border: 1px solid #555; background: #fff; display: flex; }
.page { flex: 1; padding: 16px 10px; outline: 0; font: 15px/19px "DejaVu Serif Condensed", "DejaVu Serif", serif; }
.page b { background: #000; color: #fff; font-size: 14px; padding: 1px 0; }
.err { text-decoration: underline #d02020 1px; text-underline-offset: 2px; }
.escroll { width: 14px; background: #fafafa; display: flex; flex-direction: column; justify-content: space-between; align-items: center; padding: 18px 0 16px; }

.foot { display: flex; align-items: flex-start; margin: 7px 0 0 13px; }
.foot label { padding-top: 3px; width: 48px; }
.foot label:nth-of-type(2) { margin-left: 9px; width: 49px; }
.foot label:nth-of-type(3) { margin-left: 11px; width: 38px; }
#sty { width: 167px; border-color: #8a8a8a; }
#fnt { width: 163px; height: 20px; border-color: #8a8a8a; }
#siz { width: 42px; }

.status { flex: none; height: 14px; display: flex; justify-content: flex-end; gap: 5px; padding: 2px 4px 0; }
.status span { width: 43px; height: 12px; border: solid #777; border-width: 1px 0 0 1px; overflow: hidden; text-align: right; padding-right: 9px; line-height: 10px; }
.status .end { width: 25px; }

.taskbar { flex: none; height: 48px; display: flex; align-items: center; background: #efdbd5; border-top: 1px solid #cdbbb4; padding-bottom: 2px; }
.taskbar button { position: relative; display: grid; place-items: center; }
.weather { width: 28px; margin: 0 111px 0 20px; }
.badge { position: absolute; right: 0; top: -1px; width: 16px; height: 16px; border-radius: 50%; background: #c42323; color: #fff; line-height: 16px; text-align: center; }
.green { background: #0e4a3a; right: 4px; top: 2px; }
.apps { display: flex; align-items: center; }
.apps button { width: 44px; height: 44px; }
.apps .start { width: 55px; padding-right: 0; }
.search { width: 218px; height: 32px; margin-right: 2px; border-radius: 16px; background: #fcf4f1; display: flex; align-items: center; padding: 0 3px 0 10px; gap: 8px; }
.search input { flex: 1; min-width: 0; border: 0; background: none; outline: 0; font: 14px/20px "Open Sans", sans-serif; }
.search input::placeholder { color: #6a6260; opacity: 1; }
.dell { position: absolute; font: bold 8px/10px Inter, sans-serif; }
.run::after { content: ""; position: absolute; bottom: 2px; width: 6px; height: 3px; border-radius: 2px; background: #8d8280; }
.apps .active { width: 38px; height: 40px; margin-left: 3px; border-radius: 4px; background: #faf0ed; }
.active::after { width: 16px; bottom: 0; background: #14707a; }
.tray { margin-left: auto; display: flex; align-items: center; padding-right: 20px; gap: 7px; font: 12px/16px "Open Sans", sans-serif; }
.tray .cloud { margin: 0 6px 0 10px; }
.lang { width: 30px; margin-right: 8px; }
.tray .clock { text-align: right; margin-left: 8px; display: block; }
```
